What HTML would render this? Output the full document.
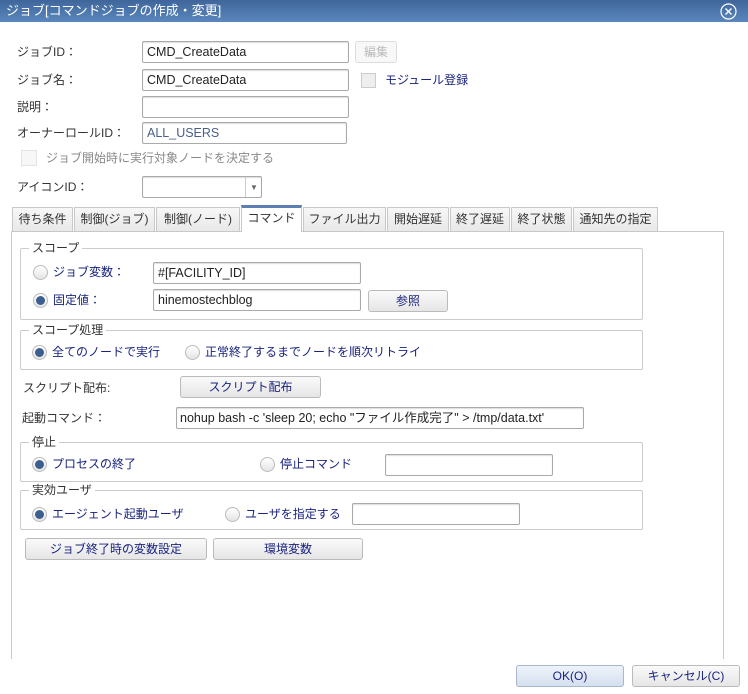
<!DOCTYPE html>
<html><head><meta charset="utf-8"><style>
*{box-sizing:border-box;margin:0;padding:0}
body{width:748px;height:694px;background:#fff;position:relative;overflow:hidden;font-family:"Liberation Sans","Noto Sans CJK JP",sans-serif;font-size:12px;color:#333}
.a{position:absolute;white-space:nowrap}
.title{left:0;top:0;width:748px;height:22px;background:linear-gradient(#3f669b,#5a87bd);color:#fff;font-size:13px;line-height:22px;padding-left:6px}
.inp{position:absolute;height:22px;border:1px solid #aaa;border-radius:2px;background:#fff;padding-left:4px;line-height:20px;font-size:12.5px;color:#222;box-shadow:inset 0 1px 1px #ddd;white-space:nowrap;overflow:hidden}
.btn{position:absolute;height:22px;border:1px solid #bbb;border-radius:3px;background:linear-gradient(#fafafa,#e6e6e6);text-align:center;line-height:20px;color:#1a237e;font-size:12px;white-space:nowrap}
.lbl{position:absolute;line-height:16px;color:#333;white-space:nowrap}
.blue{color:#1a237e}
.rad{position:absolute;width:15px;height:15px;border-radius:50%;border:1px solid #bbb;background:linear-gradient(#fff,#e4e4e4)}
.rad.on::after{content:"";position:absolute;left:2px;top:2px;width:9px;height:9px;border-radius:50%;background:#3d5f8f}
.fs{position:absolute;border:1px solid #ccc;border-radius:2px}
.lg{position:absolute;background:#fff;padding:0 3px;line-height:14px;color:#333;font-size:12px;white-space:nowrap}
.tab{position:absolute;top:207px;height:24px;border:1px solid #c8c8c8;border-bottom:none;background:linear-gradient(#f7f7f7,#e8e8e8);text-align:center;line-height:22px;font-size:12px;color:#333;white-space:nowrap;overflow:hidden}
</style></head><body>
<div class="a title">ジョブ[コマンドジョブの作成・変更]</div>
<svg class="a" style="left:720px;top:3px" width="17" height="17" viewBox="0 0 17 17"><circle cx="8.5" cy="8.5" r="7.5" fill="none" stroke="#fff" stroke-width="1.2"/><path d="M5.5 5.5L11.5 11.5M11.5 5.5L5.5 11.5" stroke="#fff" stroke-width="1.4"/></svg>

<div class="lbl" style="left:17px;top:44px">ジョブID：</div>
<div class="inp" style="left:142px;top:41px;width:207px">CMD_CreateData</div>
<div class="btn" style="left:355px;top:41px;width:42px;color:#bbb;border-color:#ddd;background:#f8f8f8">編集</div>
<div class="lbl" style="left:17px;top:72px">ジョブ名：</div>
<div class="inp" style="left:142px;top:69px;width:207px">CMD_CreateData</div>
<div class="a" style="left:361px;top:73px;width:15px;height:15px;border:1px solid #ccc;background:#eee"></div>
<div class="lbl blue" style="left:385px;top:72px">モジュール登録</div>
<div class="lbl" style="left:17px;top:99px">説明：</div>
<div class="inp" style="left:142px;top:96px;width:207px"></div>
<div class="lbl" style="left:17px;top:125px">オーナーロールID：</div>
<div class="inp" style="left:142px;top:122px;width:205px;color:#4a5f8a">ALL_USERS</div>
<div class="a" style="left:21px;top:150px;width:16px;height:16px;border:1px solid #e4e4e4;background:#f7f7f7"></div>
<div class="lbl" style="left:46px;top:150px;color:#888">ジョブ開始時に実行対象ノードを決定する</div>
<div class="lbl" style="left:17px;top:179px">アイコンID：</div>
<div class="inp" style="left:142px;top:176px;width:120px"></div>
<div class="a" style="left:245px;top:177px;width:1px;height:20px;background:#ccc"></div>
<div class="a" style="left:250px;top:183px;font-size:8px;color:#666">▼</div>

<div class="a" style="left:11px;top:231px;width:713px;height:428px;border:1px solid #c8c8c8;border-bottom:none"></div>
<div class="tab" style="left:12px;width:61px">待ち条件</div>
<div class="tab" style="left:74px;width:81px">制御(ジョブ)</div>
<div class="tab" style="left:156px;width:84px">制御(ノード)</div>
<div class="tab" style="left:241px;top:205px;height:27px;width:61px;background:#fff;border-top:3px solid #5a7fb0;line-height:21px">コマンド</div>
<div class="tab" style="left:303px;width:83px">ファイル出力</div>
<div class="tab" style="left:387px;width:62px">開始遅延</div>
<div class="tab" style="left:450px;width:60px">終了遅延</div>
<div class="tab" style="left:511px;width:61px">終了状態</div>
<div class="tab" style="left:573px;width:85px">通知先の指定</div>

<div class="fs" style="left:20px;top:248px;width:623px;height:72px"></div>
<div class="lg" style="left:29px;top:241px">スコープ</div>
<div class="rad" style="left:33px;top:265px"></div>
<div class="lbl blue" style="left:53px;top:264px">ジョブ変数：</div>
<div class="inp" style="left:153px;top:262px;width:208px">#[FACILITY_ID]</div>
<div class="rad on" style="left:33px;top:293px"></div>
<div class="lbl blue" style="left:53px;top:292px">固定値：</div>
<div class="inp" style="left:153px;top:289px;width:208px">hinemostechblog</div>
<div class="btn" style="left:368px;top:290px;width:80px">参照</div>

<div class="fs" style="left:20px;top:330px;width:623px;height:40px"></div>
<div class="lg" style="left:29px;top:323px">スコープ処理</div>
<div class="rad on" style="left:32px;top:345px"></div>
<div class="lbl blue" style="left:52px;top:344px">全てのノードで実行</div>
<div class="rad" style="left:185px;top:345px"></div>
<div class="lbl blue" style="left:205px;top:344px">正常終了するまでノードを順次リトライ</div>

<div class="lbl" style="left:23px;top:380px">スクリプト配布:</div>
<div class="btn" style="left:180px;top:376px;width:141px">スクリプト配布</div>
<div class="lbl" style="left:22px;top:410px">起動コマンド：</div>
<div class="inp" style="left:176px;top:407px;width:408px;padding-left:3px">nohup bash -c 'sleep 20; echo "ファイル作成完了" &gt; /tmp/data.txt'</div>

<div class="fs" style="left:20px;top:442px;width:623px;height:40px"></div>
<div class="lg" style="left:29px;top:435px">停止</div>
<div class="rad on" style="left:32px;top:457px"></div>
<div class="lbl blue" style="left:52px;top:456px">プロセスの終了</div>
<div class="rad" style="left:260px;top:457px"></div>
<div class="lbl blue" style="left:280px;top:456px">停止コマンド</div>
<div class="inp" style="left:385px;top:454px;width:168px"></div>

<div class="fs" style="left:20px;top:490px;width:623px;height:40px"></div>
<div class="lg" style="left:29px;top:483px">実効ユーザ</div>
<div class="rad on" style="left:32px;top:507px"></div>
<div class="lbl blue" style="left:52px;top:506px">エージェント起動ユーザ</div>
<div class="rad" style="left:225px;top:507px"></div>
<div class="lbl blue" style="left:245px;top:506px">ユーザを指定する</div>
<div class="inp" style="left:352px;top:503px;width:168px"></div>

<div class="btn" style="left:25px;top:538px;width:182px">ジョブ終了時の変数設定</div>
<div class="btn" style="left:213px;top:538px;width:150px">環境変数</div>

<div class="btn" style="left:516px;top:665px;width:108px;background:linear-gradient(#eef3fa,#d5e0ee);border-color:#a9b8cc">OK(O)</div>
<div class="btn" style="left:632px;top:665px;width:108px">キャンセル(C)</div>
</body></html>
